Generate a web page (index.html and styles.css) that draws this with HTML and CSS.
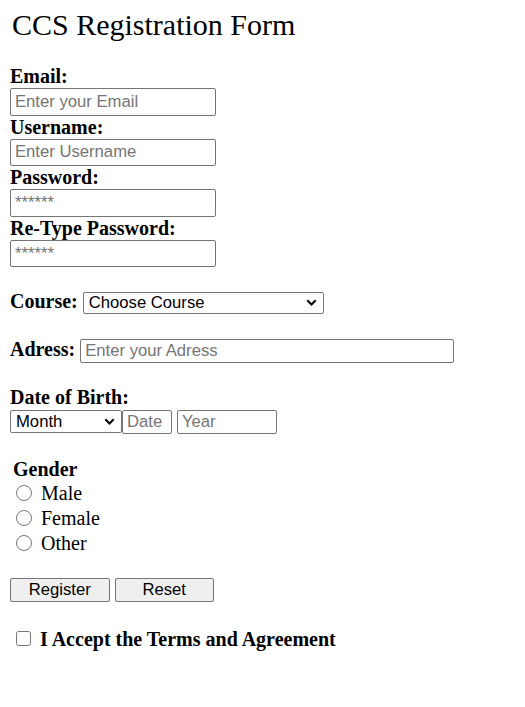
FILE: index.html
```html
<!DOCTYPE html>
<html lang="en">
<head>
<meta charset="utf-8">
<title>CCS Registration Form</title>
<link rel="stylesheet" href="styles.css">
</head>
<body>
<main class="page">
  <div class="title">CCS Registration Form</div>
  <form class="form">
    <div class="stack">
      <label class="lbl" for="email">Email:</label>
      <input class="txt" id="email" type="email" placeholder="Enter your Email">
      <label class="lbl" for="user">Username:</label>
      <input class="txt" id="user" type="text" placeholder="Enter Username">
      <label class="lbl" for="pw">Password:</label>
      <input class="txt" id="pw" type="password" placeholder="******">
      <label class="lbl" for="pw2">Re-Type Password:</label>
      <input class="txt" id="pw2" type="password" placeholder="******">
    </div>

    <div class="row course-row">
      <label class="lbl" for="course">Course:</label>
      <select class="sel sel-course" id="course">
        <option>Choose Course</option>
      </select>
    </div>

    <div class="row addr-row">
      <label class="lbl" for="addr">Adress:</label>
      <input class="txt-sm addr" id="addr" type="text" placeholder="Enter your Adress">
    </div>

    <div class="dob">
      <div class="lbl">Date of Birth:</div>
      <div class="row dob-row">
        <select class="sel sel-month">
          <option>Month</option>
        </select>
        <input class="txt-sm date" type="text" placeholder="Date">
        <input class="txt-sm year" type="text" placeholder="Year">
      </div>
    </div>

    <div class="gender">
      <div class="lbl gender-title">Gender</div>
      <label class="opt"><input class="radio" type="radio" name="g"><span>Male</span></label>
      <label class="opt"><input class="radio" type="radio" name="g"><span>Female</span></label>
      <label class="opt"><input class="radio" type="radio" name="g"><span>Other</span></label>
    </div>

    <div class="buttons">
      <button class="btn" type="submit">Register</button>
      <button class="btn" type="reset">Reset</button>
    </div>

    <label class="terms"><input class="check" type="checkbox"><span>I Accept the Terms and Agreement</span></label>
  </form>
</main>
</body>
</html>
```

FILE: styles.css
```css
html, body {
  margin: 0;
  padding: 0;
  background: #ffffff;
}

body {
  font-family: "Liberation Serif", "Times New Roman", serif;
  font-size: 20px;
  color: #000000;
}

.page {
  padding: 8px 10px 0 10px;
}

.title {
  font-size: 30px;
  line-height: 34px;
  padding-left: 2px;
}

.form {
  display: flex;
  flex-direction: column;
  align-items: flex-start;
  margin-top: 23px;
}

.stack {
  display: flex;
  flex-direction: column;
  align-items: flex-start;
}

.lbl {
  font-weight: bold;
  font-size: 20px;
  line-height: 23px;
}

.txt, .txt-sm {
  box-sizing: border-box;
  border: 1px solid #767676;
  border-radius: 2px;
  padding: 0 4px;
  margin: 0;
  font-family: "Liberation Sans", Arial, sans-serif;
  font-size: 16.67px;
  color: #000;
  background: #fff;
}

.txt {
  width: 206px;
  height: 27.6px;
}

.txt-sm {
  height: 24px;
}

.txt::placeholder, .txt-sm::placeholder {
  color: #757575;
}

.row {
  display: flex;
  align-items: baseline;
}

.course-row {
  margin-top: 23px;
  gap: 5px;
}

.sel {
  -webkit-appearance: none;
  appearance: none;
  box-sizing: border-box;
  margin: 0;
  padding: 0 20px 0 5px;
  font-family: "Liberation Sans", Arial, sans-serif;
  font-size: 16.67px;
  color: #000;
  background-color: #fff;
  background-image: url("data:image/svg+xml,%3Csvg xmlns='http://www.w3.org/2000/svg' viewBox='0 0 11 7'%3E%3Cpath d='M1.3 1.3L5.5 5.5L9.7 1.3' fill='none' stroke='%23000' stroke-width='2'/%3E%3C/svg%3E");
  background-repeat: no-repeat;
  background-size: 11px 7px;
  background-position: right 6px center;
  border: 1px solid #767676;
  border-radius: 2px;
}

.sel-course {
  width: 241px;
  height: 22px;
}

.addr-row {
  margin-top: 24px;
  gap: 5px;
}

.addr {
  width: 374px;
}

.dob {
  margin-top: 23px;
  display: flex;
  flex-direction: column;
}

.dob-row {
  margin-top: 1px;
}

.sel-month {
  width: 112px;
  height: 23px;
}

.date {
  width: 50px;
}

.year {
  width: 100px;
  margin-left: 5px;
}

.gender {
  margin-top: 24px;
  display: flex;
  flex-direction: column;
}

.gender-title {
  padding-left: 3px;
}

.opt {
  display: flex;
  align-items: center;
  height: 25px;
  line-height: 23px;
}

.radio {
  width: 16px;
  height: 16px;
  margin: 0 9px 0 6px;
}

.buttons {
  display: flex;
  gap: 5px;
  margin-top: 22.5px;
}

.btn {
  box-sizing: border-box;
  width: 99.5px;
  height: 24px;
  margin: 0;
  padding: 0;
  font-family: "Liberation Sans", Arial, sans-serif;
  font-size: 16.67px;
  color: #000;
  background: #efefef;
  border: 1px solid #767676;
  border-radius: 2px;
}

.terms {
  display: flex;
  align-items: center;
  margin-top: 26px;
  font-weight: bold;
  line-height: 23px;
}

.check {
  width: 15px;
  height: 15px;
  margin: 0 9px 3.5px 6px;
}
```
